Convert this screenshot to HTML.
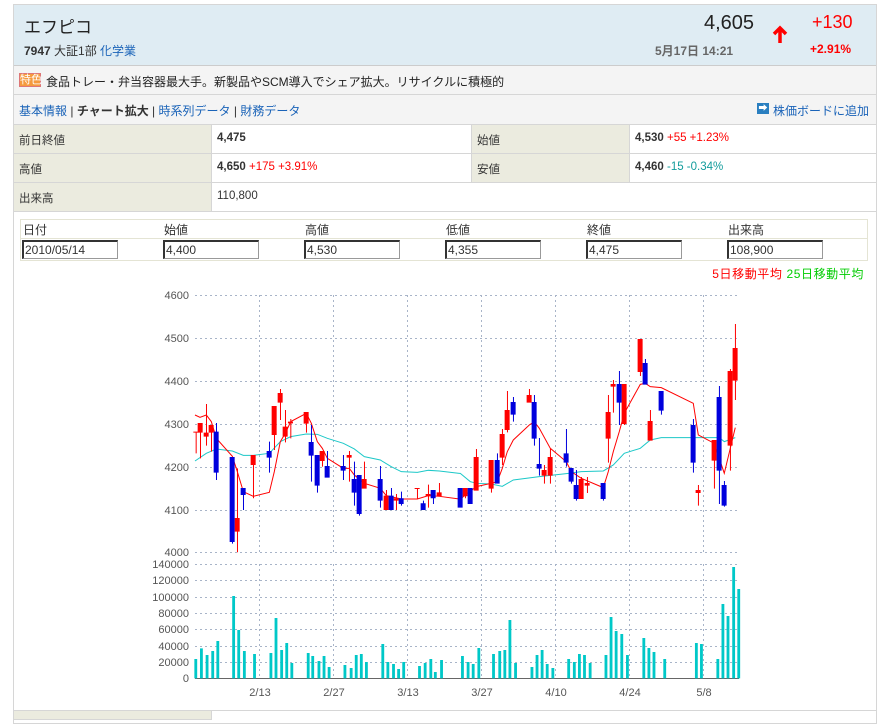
<!DOCTYPE html>
<html><head><meta charset="utf-8">
<style>
*{box-sizing:border-box;margin:0;padding:0}
body{width:882px;height:715px;background:#fff;font-family:"Liberation Sans","Noto Sans CJK JP",sans-serif;font-size:12px;color:#333;position:relative;overflow:hidden}
.a{position:absolute;white-space:nowrap}
.wrap{position:absolute;left:13px;top:4px;width:864px;height:720px;border:1px solid #d6d6d6}
.hd{position:absolute;left:14px;top:5px;width:862px;height:61px;background:#dfecf3;border-bottom:1px solid #ccc}
.bar{position:absolute;left:14px;width:862px;background:#f4f4f4;border-bottom:1px solid #d6d6d6}
.lab{position:absolute;background:#ebebdf;border-bottom:1px solid #d6d6d6;border-right:1px solid #d6d6d6}
.val{position:absolute;border-bottom:1px solid #d6d6d6;border-right:1px solid #d6d6d6}
a{color:#1a63b8;text-decoration:none}
.r{color:#f00}.g{color:#129c9c}
.in{position:absolute;top:240px;width:96px;height:19px;border:1px solid #999;border-top:2px solid #333;border-left:2px solid #333;font-size:12px;padding:1px 1px;background:#fff}
.th{position:absolute;top:221px;font-size:12px}
.t{font-size:11.5px}
</style></head><body>
<div class="wrap"></div>
<div class="hd"></div>
<div class="a" style="left:24px;top:13px;font-size:17px;color:#222">エフピコ</div>
<div class="a" style="left:24px;top:42px;font-size:12px"><b>7947</b> 大証1部 <a>化学業</a></div>
<div class="a" style="left:704px;top:12px;font-size:20px;color:#222">4,605</div>
<svg class="a" style="left:771px;top:25px" width="18" height="20" viewBox="0 0 18 20"><path d="M9 3 L9 18 M3 9 L9 3 L15 9" stroke="#f00" stroke-width="3.5" fill="none"/></svg>
<div class="a r" style="left:812px;top:12px;font-size:18px">+130</div>
<div class="a" style="left:655px;top:42px;font-size:12px;font-weight:bold;color:#666">5月17日 14:21</div>
<div class="a r" style="left:810px;top:42px;font-size:12px;font-weight:bold">+2.91%</div>
<div class="bar" style="top:66px;height:29px"></div>
<div class="a" style="left:19px;top:73px;width:22px;height:14px;background:#f59a3e;border:1px solid #d77;color:#fff;font-size:11px;line-height:12px;text-align:center">特色</div>
<div class="a" style="left:46px;top:73px;font-size:12px;color:#222">食品トレー・弁当容器最大手。新製品やSCM導入でシェア拡大。リサイクルに積極的</div>
<div class="bar" style="top:95px;height:30px"></div>
<div class="a" style="left:19px;top:102px;font-size:12px"><a>基本情報</a> | <b>チャート拡大</b> | <a>時系列データ</a> | <a>財務データ</a></div>
<div class="a" style="left:757px;top:103px;width:12px;height:11px;background:#2a7fc0;color:#fff;font-size:9px;line-height:11px;text-align:center">➡</div>
<div class="a" style="left:773px;top:102px;font-size:12px"><a>株価ボードに追加</a></div>

<div class="lab" style="left:14px;top:125px;width:198px;height:29px"></div>
<div class="val" style="left:212px;top:125px;width:260px;height:29px"></div>
<div class="lab" style="left:472px;top:125px;width:158px;height:29px"></div>
<div class="val" style="left:630px;top:125px;width:246px;height:29px;border-right:0"></div>
<div class="lab" style="left:14px;top:154px;width:198px;height:29px"></div>
<div class="val" style="left:212px;top:154px;width:260px;height:29px"></div>
<div class="lab" style="left:472px;top:154px;width:158px;height:29px"></div>
<div class="val" style="left:630px;top:154px;width:246px;height:29px;border-right:0"></div>
<div class="lab" style="left:14px;top:183px;width:198px;height:29px"></div>
<div class="val" style="left:212px;top:183px;width:664px;height:29px;border-right:0"></div>
<div class="a t" style="left:19px;top:132px">前日終値</div>
<div class="a t" style="left:217px;top:132px"><b>4,475</b></div>
<div class="a t" style="left:477px;top:132px">始値</div>
<div class="a t" style="left:635px;top:132px"><b>4,530</b> <span class="r">+55 +1.23%</span></div>
<div class="a t" style="left:19px;top:161px">高値</div>
<div class="a t" style="left:217px;top:161px"><b>4,650</b> <span class="r">+175 +3.91%</span></div>
<div class="a t" style="left:477px;top:161px">安値</div>
<div class="a t" style="left:635px;top:161px"><b>4,460</b> <span class="g">-15 -0.34%</span></div>
<div class="a t" style="left:19px;top:190px">出来高</div>
<div class="a t" style="left:217px;top:190px">110,800</div>

<div class="a" style="left:20px;top:219px;width:848px;height:42px;border:1px solid #e4e4d4"></div>
<div class="a" style="left:20px;top:238px;width:848px;height:1px;background:#e4e4d4"></div>
<div class="th" style="left:23px">日付</div><div class="th" style="left:164px">始値</div><div class="th" style="left:305px">高値</div><div class="th" style="left:446px">低値</div><div class="th" style="left:587px">終値</div><div class="th" style="left:728px">出来高</div>
<div class="in" style="left:22px">2010/05/14</div><div class="in" style="left:163px">4,400</div><div class="in" style="left:304px">4,530</div><div class="in" style="left:445px">4,355</div><div class="in" style="left:586px">4,475</div><div class="in" style="left:727px">108,900</div>
<div class="a" style="right:18px;top:265px;font-size:12px;letter-spacing:0.6px"><span class="r">5日移動平均</span> <span style="color:#0c0">25日移動平均</span></div>

<svg class="a" style="left:0;top:0" width="882" height="715">
<g stroke="#a8b4c8" stroke-width="1" stroke-dasharray="2,3" fill="none">
<path d="M195 295.5H737M195 338.5H737M195 381.5H737M195 424.5H737M195 467.5H737M195 510.5H737M195 552.5H737"/>
<path d="M259.5 295V552M333.5 295V552M407.5 295V552M481.5 295V552M555.5 295V552M629.5 295V552M703.5 295V552"/>
<path d="M195 564.5H737M195 580.5H737M195 597.5H737M195 613.5H737M195 629.5H737M195 646.5H737M195 662.5H737"/>
<path d="M259.5 564V678M333.5 564V678M407.5 564V678M481.5 564V678M555.5 564V678M629.5 564V678M703.5 564V678"/>
</g>
<g font-size="11" fill="#555" text-anchor="end" font-family="Liberation Sans,sans-serif">
<text x="189" y="299">4600</text><text x="189" y="342">4500</text><text x="189" y="385">4400</text><text x="189" y="428">4300</text><text x="189" y="471">4200</text><text x="189" y="514">4100</text><text x="189" y="556">4000</text>
<text x="189" y="568">140000</text><text x="189" y="584">120000</text><text x="189" y="601">100000</text><text x="189" y="617">80000</text><text x="189" y="633">60000</text><text x="189" y="650">40000</text><text x="189" y="666">20000</text><text x="189" y="682">0</text>
</g>
<g font-size="11" fill="#555" text-anchor="middle" font-family="Liberation Sans,sans-serif">
<text x="260" y="696">2/13</text><text x="334" y="696">2/27</text><text x="408" y="696">3/13</text><text x="482" y="696">3/27</text><text x="556" y="696">4/10</text><text x="630" y="696">4/24</text><text x="704" y="696">5/8</text>
</g>
<line x1="195" y1="678.5" x2="739" y2="678.5" stroke="#666"/>
<g transform="translate(0,555) scale(0.565,0.3333)" fill="#00c8c8">
<path d="M344 312h5v58h-5zM354 280h5v90h-5zM364 300h5v70h-5zM374 288h5v82h-5zM383 258h5v112h-5zM411 123h5v247h-5zM420 225h5v145h-5zM430 288h5v82h-5zM448 297h5v73h-5zM477 294h5v76h-5zM486 189h5v181h-5zM496 285h5v85h-5zM505 264h5v106h-5zM514 324h5v46h-5zM543 294h5v76h-5zM551 303h5v67h-5zM562 318h5v52h-5zM571 303h5v67h-5zM580 336h5v34h-5zM608 330h5v40h-5zM619 339h5v31h-5zM628 300h5v70h-5zM637 297h5v73h-5zM646 321h5v49h-5zM675 267h5v103h-5zM684 321h5v49h-5zM694 327h5v43h-5zM703 342h5v28h-5zM712 321h5v49h-5zM740 333h5v37h-5zM750 324h5v46h-5zM760 312h5v58h-5zM768 351h5v19h-5zM779 315h5v55h-5zM816 303h5v67h-5zM826 321h5v49h-5zM835 327h5v43h-5zM845 279h5v91h-5zM871 297h5v73h-5zM882 288h5v82h-5zM891 285h5v85h-5zM900 195h5v175h-5zM910 324h5v46h-5zM939 336h5v34h-5zM948 300h5v70h-5zM957 285h5v85h-5zM966 327h5v43h-5zM976 339h5v31h-5zM1004 312h5v58h-5zM1014 321h5v49h-5zM1023 297h5v73h-5zM1032 300h5v70h-5zM1042 324h5v46h-5zM1070 300h5v70h-5zM1079 186h5v184h-5zM1088 228h5v142h-5zM1098 237h5v133h-5zM1108 300h5v70h-5zM1137 249h5v121h-5zM1146 279h5v91h-5zM1155 291h5v79h-5zM1174 312h5v58h-5zM1230 264h5v106h-5zM1239 267h5v103h-5zM1268 312h5v58h-5zM1277 147h5v223h-5zM1286 183h5v187h-5zM1296 36h5v334h-5zM1305 102h5v268h-5z"/>
</g>
<g transform="translate(140,285) scale(0.3333)">
<polyline fill="none" stroke="#1cc8c8" stroke-width="3" points="165,528 199,505 229,492 277,498 310,511 340,511 388,505 421,470 452,455 499,447 532,448 562,460 610,475 643,492 673,515 721,525 754,545 784,560 832,562 865,556 898,558 958,565 961,565 991,590 1009,595 1054,597 1087,604 1120,585 1198,575 1279,566 1324,560 1390,558 1420,540 1453,505 1501,490 1531,465 1564,458 1738,458 1753,470 1786,458"/>
<polyline fill="none" stroke="#f00" stroke-width="3" points="165,390 180,397 199,390 214,410 229,460 277,514 292,560 310,620 340,634 388,622 403,560 421,470 436,445 452,410 499,385 514,415 532,470 547,490 562,520 610,550 628,550 643,570 673,595 721,610 739,632 784,642 832,642 865,632 898,634 958,642 961,642 1009,605 1054,595 1072,590 1087,550 1102,500 1120,465 1168,420 1183,410 1198,430 1231,490 1279,530 1294,560 1324,580 1390,608 1405,560 1420,500 1438,440 1453,385 1501,298 1516,295 1531,305 1564,308 1660,355 1675,450 1723,475 1738,520 1753,565 1771,490 1786,428"/>
<g fill="#f00">
<path d="M167 440h3v65h-3zM160 440h15v3h-15z"/>
<path d="M180 414h3v106h-3zM173 414h15v29h-15z"/>
<path d="M198 357h3v125h-3zM191 443h15v12h-15z"/>
<path d="M213 420h3v80h-3zM206 420h15v23h-15z"/>
<path d="M291 550h3v252h-3zM284 699h15v41h-15z"/>
<path d="M339 510h3v130h-3zM332 510h15v30h-15z"/>
<path d="M402 363h3v132h-3zM395 363h15v87h-15z"/>
<path d="M420 312h3v93h-3zM413 324h15v29h-15z"/>
<path d="M435 375h3v97h-3zM428 425h15v30h-15z"/>
<path d="M451 402h3v58h-3zM444 410h15v5h-15z"/>
<path d="M498 381h3v62h-3zM491 381h15v35h-15z"/>
<path d="M546 498h3v47h-3zM539 498h15v30h-15z"/>
<path d="M627 498h3v92h-3zM620 510h15v8h-15z"/>
<path d="M672 530h3v81h-3zM665 582h15v29h-15z"/>
<path d="M738 615h3v60h-3zM731 632h15v43h-15z"/>
<path d="M768 627h3v48h-3zM761 640h15v7h-15z"/>
<path d="M831 609h3v33h-3zM824 609h15v3h-15z"/>
<path d="M864 599h3v69h-3zM857 627h15v7h-15z"/>
<path d="M897 594h3v40h-3zM890 622h15v12h-15z"/>
<path d="M975 609h3v31h-3zM968 609h15v25h-15z"/>
<path d="M1008 492h3v125h-3zM1001 516h15v101h-15z"/>
<path d="M1053 525h3v98h-3zM1046 525h15v86h-15z"/>
<path d="M1086 432h3v108h-3zM1079 447h15v71h-15z"/>
<path d="M1101 318h3v124h-3zM1094 375h15v60h-15z"/>
<path d="M1167 312h3v41h-3zM1160 330h15v23h-15z"/>
<path d="M1212 540h3v56h-3zM1205 555h15v17h-15z"/>
<path d="M1230 492h3v104h-3zM1223 516h15v56h-15z"/>
<path d="M1323 576h3v66h-3zM1316 582h15v60h-15z"/>
<path d="M1341 576h3v48h-3zM1334 594h15v8h-15z"/>
<path d="M1404 330h3v203h-3zM1397 381h15v80h-15z"/>
<path d="M1419 285h3v98h-3zM1412 297h15v8h-15z"/>
<path d="M1452 297h3v123h-3zM1445 297h15v120h-15z"/>
<path d="M1500 162h3v111h-3zM1493 162h15v99h-15z"/>
<path d="M1530 375h3v92h-3zM1523 408h15v59h-15z"/>
<path d="M1674 600h3v62h-3zM1667 615h15v9h-15z"/>
<path d="M1722 465h3v146h-3zM1715 465h15v62h-15z"/>
<path d="M1770 252h3v305h-3zM1763 258h15v224h-15z"/>
<path d="M1785 117h3v228h-3zM1778 189h15v98h-15z"/>
</g>
<g fill="#0000dd">
<path d="M228 414h3v171h-3zM221 440h15v123h-15z"/>
<path d="M276 516h3v260h-3zM269 516h15v255h-15z"/>
<path d="M309 609h3v66h-3zM302 609h15v21h-15z"/>
<path d="M387 470h3v93h-3zM380 498h15v20h-15z"/>
<path d="M513 420h3v170h-3zM506 471h15v41h-15z"/>
<path d="M531 510h3v113h-3zM524 510h15v92h-15z"/>
<path d="M561 498h3v80h-3zM554 543h15v35h-15z"/>
<path d="M609 510h3v75h-3zM602 543h15v14h-15z"/>
<path d="M642 530h3v132h-3zM635 582h15v41h-15z"/>
<path d="M657 570h3v122h-3zM650 570h15v117h-15z"/>
<path d="M720 543h3v125h-3zM713 582h15v65h-15z"/>
<path d="M753 609h3v66h-3zM746 632h15v43h-15z"/>
<path d="M783 620h3v42h-3zM776 640h15v17h-15z"/>
<path d="M849 647h3v28h-3zM842 655h15v20h-15z"/>
<path d="M879 615h3v42h-3zM872 615h15v25h-15z"/>
<path d="M960 609h3v59h-3zM953 609h15v59h-15z"/>
<path d="M990 609h3v48h-3zM983 609h15v48h-15z"/>
<path d="M1071 505h3v91h-3zM1064 525h15v71h-15z"/>
<path d="M1119 336h3v74h-3zM1112 351h15v38h-15z"/>
<path d="M1182 330h3v152h-3zM1175 351h15v110h-15z"/>
<path d="M1197 459h3v113h-3zM1190 537h15v14h-15z"/>
<path d="M1278 432h3v113h-3zM1271 505h15v28h-15z"/>
<path d="M1293 549h3v47h-3zM1286 549h15v41h-15z"/>
<path d="M1308 555h3v92h-3zM1301 600h15v42h-15z"/>
<path d="M1389 594h3v53h-3zM1382 594h15v48h-15z"/>
<path d="M1437 258h3v162h-3zM1430 297h15v56h-15z"/>
<path d="M1515 222h3v77h-3zM1508 234h15v65h-15z"/>
<path d="M1563 318h3v71h-3zM1556 318h15v59h-15z"/>
<path d="M1659 402h3v161h-3zM1652 420h15v113h-15z"/>
<path d="M1737 303h3v354h-3zM1730 336h15v221h-15z"/>
<path d="M1752 588h3v77h-3zM1745 600h15v62h-15z"/>
</g>
</g>
</svg>
<div class="lab" style="left:14px;top:710px;width:198px;height:10px;border-top:1px solid #d6d6d6"></div>
<div class="a" style="left:212px;top:710px;width:664px;height:1px;background:#d6d6d6"></div>
</body></html>
